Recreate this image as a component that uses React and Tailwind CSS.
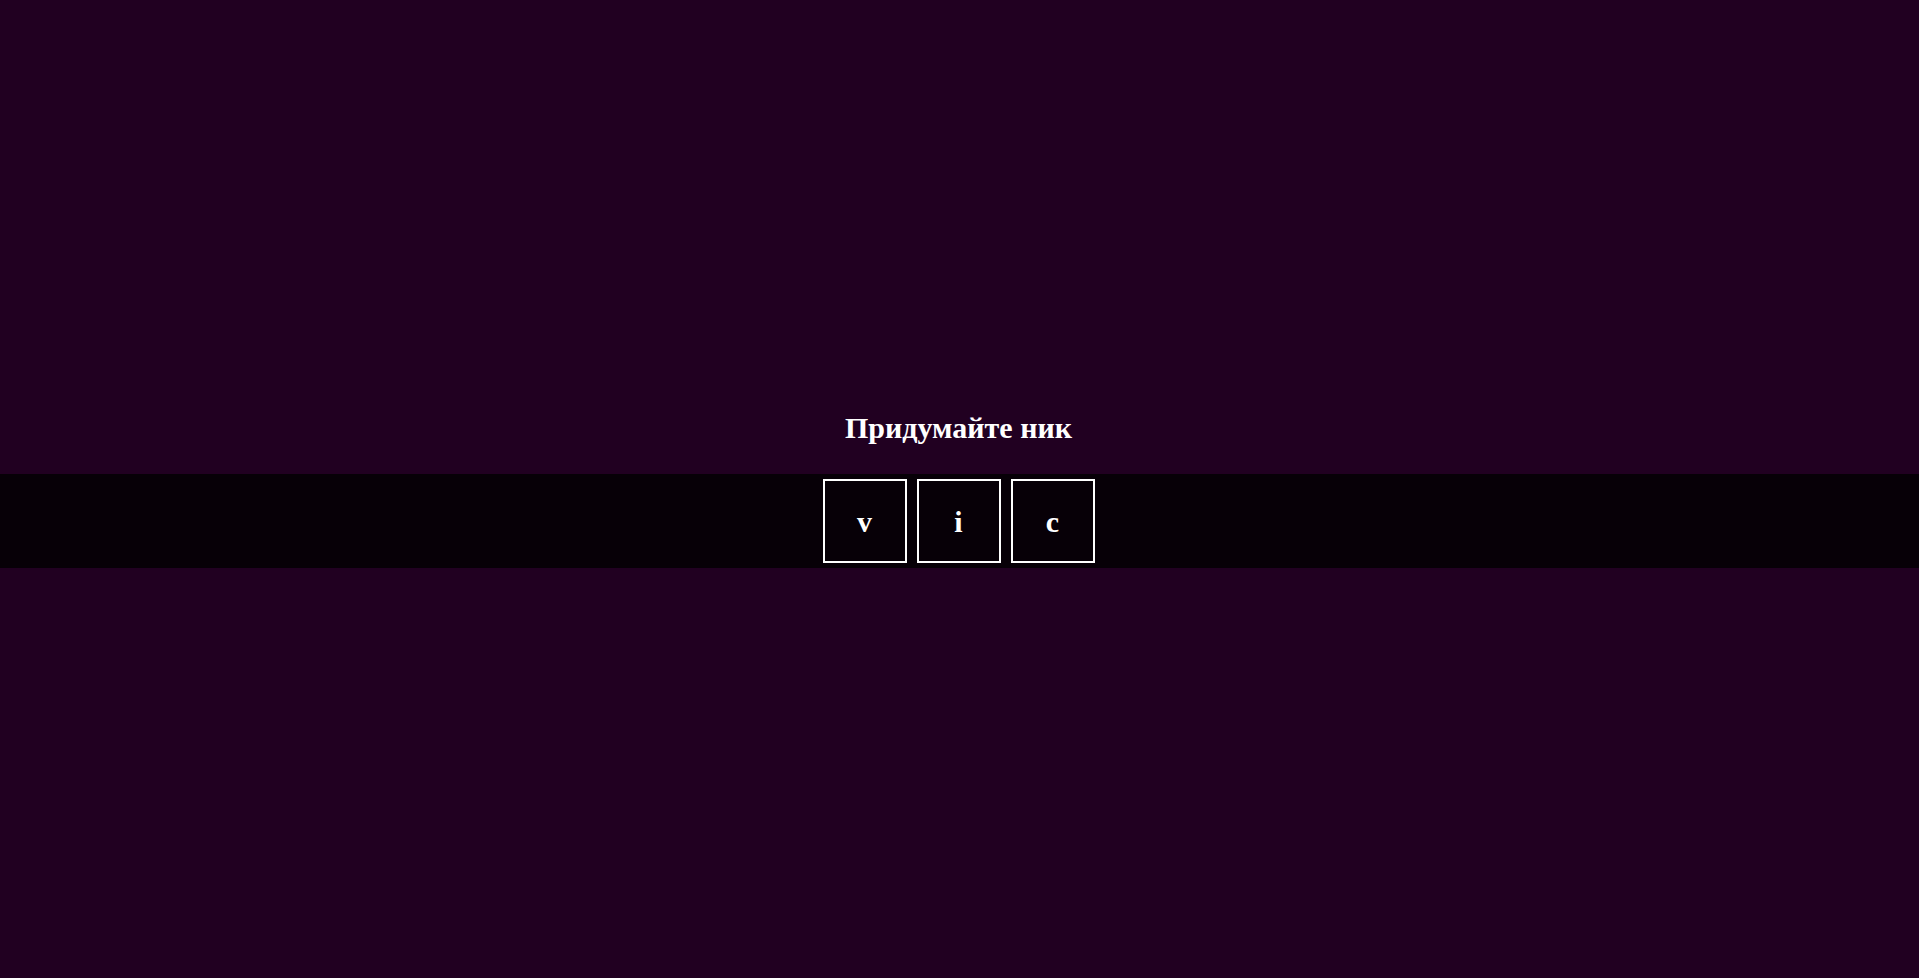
import React from "react";

const letters = ["v", "i", "c"];

export default function App() {
  return (
    <div
      className="min-h-screen bg-[#210021] flex flex-col justify-center text-white pr-[2px]"
      style={{ fontFamily: '"Liberation Serif", "Times New Roman", serif' }}
    >
      <h1 className="text-center text-[30px] font-bold leading-[35px] mb-[29px]">Придумайте ник</h1>
      <div className="bg-[#070007] py-[5px] flex justify-center gap-[10px] -mr-[2px] pr-[2px]">
        {letters.map((l) => (
          <div
            key={l}
            className="w-[84px] h-[84px] border-2 border-white flex items-center justify-center text-[30px] font-bold"
          >
            {l}
          </div>
        ))}
      </div>
    </div>
  );
}
